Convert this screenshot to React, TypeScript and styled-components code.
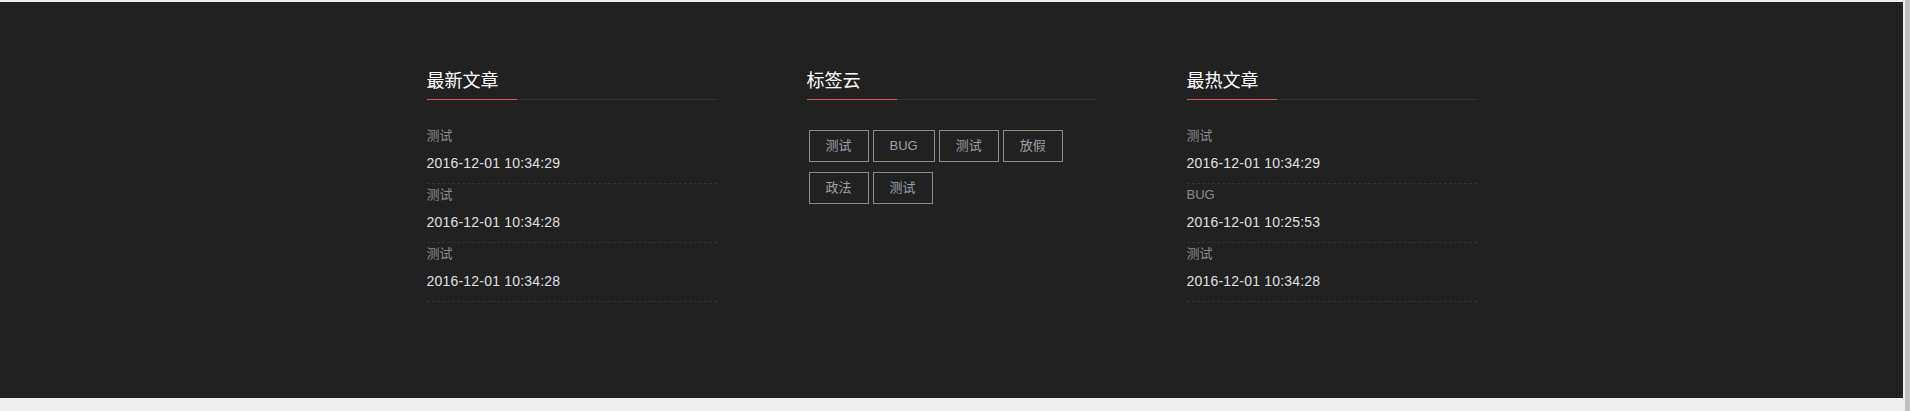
import React from "react";
import styled, { createGlobalStyle } from "styled-components";

const GlobalStyle = createGlobalStyle`
  html, body { margin: 0; padding: 0; background: #eeeeee; }
  body { font-family: "Liberation Sans", "Noto Sans CJK SC", sans-serif; }
  * { box-sizing: border-box; }
`;

const Page = styled.div`
  display: flex;
  height: 411px;
  background: #eeeeee;
`;

const Footer = styled.footer`
  flex: 1;
  margin: 2px 2px 0 0;
  height: 396px;
  background: #212121;
  padding-top: 65px;
`;

const ScrollBar = styled.div`
  width: 5px;
  background: #c1c1c1;
`;

const Container = styled.div`
  width: 1050px;
  margin: 0 auto;
  display: grid;
  grid-template-columns: repeat(3, 290px);
  column-gap: 90px;
`;

const Column = styled.section`
  display: flex;
  flex-direction: column;
`;

const Heading = styled.h3`
  position: relative;
  margin: 0;
  font-size: 18px;
  font-weight: normal;
  line-height: 24px;
  color: #ffffff;
  padding: 2px 0 6px;
  border-bottom: 1px solid #333333;
  &::after {
    content: "";
    position: absolute;
    left: 0;
    bottom: -1px;
    width: 90px;
    height: 1px;
    background: #e8574b;
  }
`;

const List = styled.ul`
  list-style: none;
  margin: 25px 0 0;
  padding: 0;
`;

const Item = styled.li`
  padding: 1px 0 10px;
  border-bottom: 1px dashed #333333;
  display: flex;
  flex-direction: column;
  gap: 7px;
`;

const ItemTitle = styled.a`
  font-size: 13px;
  line-height: 20px;
  color: #8c8c8c;
  text-decoration: none;
`;

const ItemDate = styled.span`
  font-size: 14px;
  line-height: 20px;
  color: #e0e0e0;
  letter-spacing: 0.2px;
`;

const Tags = styled.div`
  margin: 30px 0 0 2px;
  display: flex;
  flex-wrap: wrap;
  gap: 10px 4px;
`;

const Tag = styled.a`
  display: inline-block;
  height: 32px;
  line-height: 30px;
  padding: 0 16px;
  border: 1px solid #8a8a8a;
  font-size: 13px;
  color: #9aa0a6;
  text-decoration: none;
`;

type Post = { title: string; date: string };

const latest: Post[] = [
  { title: "测试", date: "2016-12-01 10:34:29" },
  { title: "测试", date: "2016-12-01 10:34:28" },
  { title: "测试", date: "2016-12-01 10:34:28" },
];

const hottest: Post[] = [
  { title: "测试", date: "2016-12-01 10:34:29" },
  { title: "BUG", date: "2016-12-01 10:25:53" },
  { title: "测试", date: "2016-12-01 10:34:28" },
];

const tags = ["测试", "BUG", "测试", "放假", "政法", "测试"];

const PostList = ({ posts }: { posts: Post[] }) => (
  <List>
    {posts.map((p, i) => (
      <Item key={i}>
        <ItemTitle href="#">{p.title}</ItemTitle>
        <ItemDate>{p.date}</ItemDate>
      </Item>
    ))}
  </List>
);

export default function App() {
  return (
    <>
      <GlobalStyle />
      <Page>
        <Footer>
          <Container>
            <Column>
              <Heading>最新文章</Heading>
              <PostList posts={latest} />
            </Column>
            <Column>
              <Heading>标签云</Heading>
              <Tags>
                {tags.map((t, i) => (
                  <Tag key={i} href="#">
                    {t}
                  </Tag>
                ))}
              </Tags>
            </Column>
            <Column>
              <Heading>最热文章</Heading>
              <PostList posts={hottest} />
            </Column>
          </Container>
        </Footer>
        <ScrollBar />
      </Page>
    </>
  );
}
